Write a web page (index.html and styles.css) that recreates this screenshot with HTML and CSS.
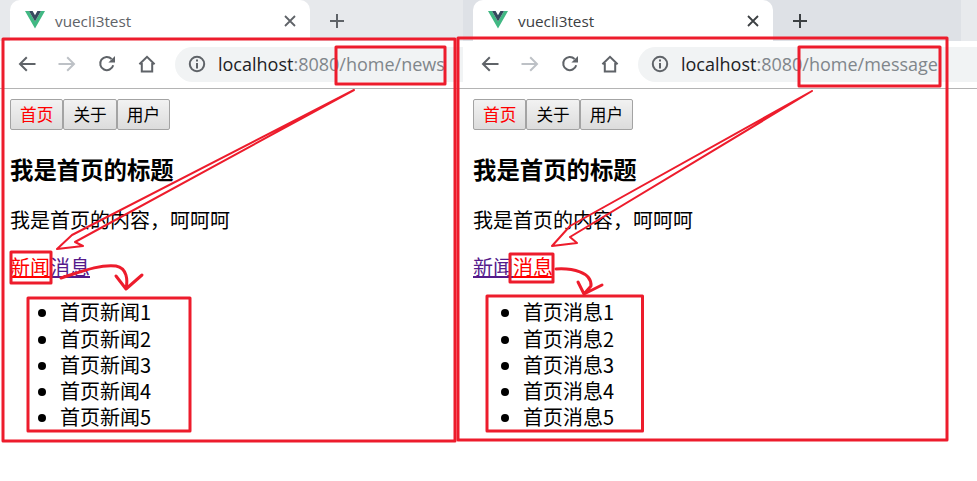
FILE: index.html
```html
<!DOCTYPE html>
<html lang="zh-CN">
<head>
<meta charset="utf-8">
<title>vuecli3test</title>
<link rel="stylesheet" href="styles.css">
</head>
<body>
<svg class="defs" aria-hidden="true">
  <symbol id="i-vue" viewBox="0 0 20 18">
    <path d="M0 0H4L10 10.5 16 0H20L10 17.5Z" fill="#41b883"/>
    <path d="M4 0H7.6L10 4.2 12.4 0H16L10 10.5Z" fill="#35495e"/>
  </symbol>
  <symbol id="i-close" viewBox="0 0 12 12">
    <path d="M1 1L11 11M11 1L1 11" fill="none" stroke="currentColor" stroke-width="1.8"/>
  </symbol>
  <symbol id="i-plus" viewBox="0 0 16 16">
    <path d="M8 1V15M1 8H15" fill="none" stroke="currentColor" stroke-width="2"/>
  </symbol>
  <symbol id="i-arrow" viewBox="0 0 18 16">
    <path d="M17.5 8H2M8.8 1.2L2 8L8.8 14.8" fill="none" stroke="currentColor" stroke-width="2"/>
  </symbol>
  <symbol id="i-reload" viewBox="0 0 18 18">
    <path d="M15.2 10.2A6.6 6.6 0 1 1 13.6 4" fill="none" stroke="currentColor" stroke-width="2"/>
    <path d="M10.4 7.6H17V1Z" fill="currentColor"/>
  </symbol>
  <symbol id="i-home" viewBox="0 0 18 18">
    <path d="M1.4 9.2L9 1.8L16.6 9.2M3.8 8V16.4H14.2V8" fill="none" stroke="currentColor" stroke-width="2"/>
  </symbol>
  <symbol id="i-info" viewBox="0 0 18 18">
    <circle cx="9" cy="9" r="7.2" fill="none" stroke="currentColor" stroke-width="2"/>
    <path d="M8 8H10V13.4H8ZM8 4.6H10V6.6H8Z" fill="currentColor"/>
  </symbol>
</svg>

<div class="stage">
  <section class="browser browser-left">
    <div class="tabstrip">
      <div class="tab">
        <svg class="tab-logo"><use href="#i-vue"/></svg>
        <span class="tab-title">vuecli3test</span>
        <svg class="tab-close"><use href="#i-close"/></svg>
      </div>
      <svg class="tab-new"><use href="#i-plus"/></svg>
    </div>
    <div class="toolbar">
      <svg class="nav-icon"><use href="#i-arrow"/></svg>
      <svg class="nav-icon nav-forward"><use href="#i-arrow"/></svg>
      <svg class="nav-icon"><use href="#i-reload"/></svg>
      <svg class="nav-icon"><use href="#i-home"/></svg>
      <div class="omnibox">
        <svg class="info-icon"><use href="#i-info"/></svg>
        <span class="url"><span class="host">localhost</span>:8080/home/news</span>
      </div>
    </div>
    <div class="page">
      <div class="btn-row">
        <button class="btn btn-active">首页</button><button class="btn">关于</button><button class="btn">用户</button>
      </div>
      <h3 class="heading">我是首页的标题</h3>
      <p class="para">我是首页的内容&#xFF0C;呵呵呵</p>
      <div class="links"><a class="link link-active">新闻</a><a class="link">消息</a></div>
      <ul class="list">
        <li>首页新闻1</li>
        <li>首页新闻2</li>
        <li>首页新闻3</li>
        <li>首页新闻4</li>
        <li>首页新闻5</li>
      </ul>
    </div>
  </section>

  <section class="browser browser-right">
    <div class="tabstrip">
      <div class="tab">
        <svg class="tab-logo"><use href="#i-vue"/></svg>
        <span class="tab-title">vuecli3test</span>
        <svg class="tab-close"><use href="#i-close"/></svg>
      </div>
      <svg class="tab-new"><use href="#i-plus"/></svg>
      <div class="strip-end"></div>
    </div>
    <div class="toolbar">
      <svg class="nav-icon"><use href="#i-arrow"/></svg>
      <svg class="nav-icon nav-forward"><use href="#i-arrow"/></svg>
      <svg class="nav-icon"><use href="#i-reload"/></svg>
      <svg class="nav-icon"><use href="#i-home"/></svg>
      <div class="omnibox">
        <svg class="info-icon"><use href="#i-info"/></svg>
        <span class="url"><span class="host">localhost</span>:8080/home/message</span>
      </div>
    </div>
    <div class="page">
      <div class="btn-row">
        <button class="btn btn-active">首页</button><button class="btn">关于</button><button class="btn">用户</button>
      </div>
      <h3 class="heading">我是首页的标题</h3>
      <p class="para">我是首页的内容&#xFF0C;呵呵呵</p>
      <div class="links"><a class="link">新闻</a><a class="link link-active">消息</a></div>
      <ul class="list">
        <li>首页消息1</li>
        <li>首页消息2</li>
        <li>首页消息3</li>
        <li>首页消息4</li>
        <li>首页消息5</li>
      </ul>
    </div>
  </section>

  <svg class="markup" viewBox="0 0 977 481" aria-hidden="true">
    <rect x="3" y="39" width="452" height="402"/>
    <rect x="458" y="38" width="489" height="402"/>
    <rect x="336" y="47" width="109" height="37"/>
    <rect x="799" y="47" width="141" height="39"/>
    <rect x="11" y="252" width="40" height="31"/>
    <rect x="510" y="254" width="43" height="28"/>
    <rect x="28" y="298" width="162" height="133"/>
    <rect x="487" y="296" width="155.500" height="135"/>
    <path class="thin" d="M354 90L72 235L57 249L83 246L75 242L354 90"/>
    <path class="thin" d="M812 91L570 226L552 246L577 243L570 237L812 91"/>
    <path d="M61 278C80 272 100 264 116 266C127 268 128 280 126 289M116 276L126 289L142 275"/>
    <path d="M556 269C572 268 592 272 591 286L584 294M578 282L584 294L602 285"/>
  </svg>
</div>
</body>
</html>
```

FILE: styles.css
```css
* { box-sizing: border-box; }

html, body { margin: 0; background: #fff; }

.defs { display: none; }

.stage {
  position: relative;
  display: flex;
  width: 977px;
  height: 481px;
  overflow: hidden;
  font-family: "Noto Sans CJK SC", "Noto Sans", sans-serif;
  color: #000;
}

.browser { flex: none; }
.browser-left { width: 463px; --strip: #e7e9ec; --tab-ink: #5f6368; }
.browser-right { width: 514px; --strip: #dee1e6; --tab-ink: #3c4043; }

.tabstrip {
  display: flex;
  align-items: center;
  height: 41px;
  padding-left: 10px;
  background: var(--strip);
}

.tab {
  display: flex;
  align-items: center;
  width: 300px;
  height: 41px;
  padding: 0 14px 0 15px;
  background: #fff;
  border-radius: 10px 10px 0 0;
}

.tab-logo { width: 20px; height: 18px; margin-top: -1px; }

.tab-title {
  flex: 1;
  margin-left: 10px;
  font-family: "Open Sans", sans-serif;
  font-size: 15.3px;
  color: var(--tab-ink);
}

.tab-close { width: 12px; height: 12px; color: var(--tab-ink); }

.tab-new { width: 16px; height: 16px; margin-left: 19px; color: var(--tab-ink); }

.strip-end { align-self: stretch; width: 16px; margin-left: auto; background: #e8eaed; }

.toolbar {
  display: flex;
  align-items: center;
  height: 48px;
  padding: 0 0 1px 18px;
  border-bottom: 1px solid #b4b4b4;
  background: #fff;
}

.nav-icon { width: 18px; height: 18px; margin-right: 22px; color: #5f6368; flex: none; }
.nav-forward { color: #bdc1c6; transform: scaleX(-1); }

.omnibox {
  display: flex;
  align-items: center;
  flex: 1;
  height: 35px;
  margin-left: -3px;
  padding-left: 13px;
  border-radius: 18px 0 0 18px;
  background: #f1f3f4;
  min-width: 0;
}

.info-icon { width: 18px; height: 18px; color: #5f6368; flex: none; }

.url {
  margin-left: 12px;
  font-family: "Open Sans", sans-serif;
  font-size: 18px;
  color: #80868b;
  white-space: nowrap;
}

.host { color: #202124; }

.page { padding: 10px 10px 0; font-size: 20px; line-height: 26.25px; }

.btn-row { display: flex; height: 31px; }

.btn {
  width: 53.4px;
  height: 31px;
  padding: 0;
  border: 1px solid #a3a3a3;
  border-radius: 2px;
  background: linear-gradient(#f2f2f2, #dcdcdc);
  font: 16.67px/1 "Noto Sans CJK SC", sans-serif;
  color: #000;
}

.btn-active { color: #f00; }

.heading {
  margin: 24px 0 23px;
  font-size: 23.4px;
  line-height: 30px;
  font-weight: 700;
}

.para { margin: 0 0 21px; }

.links { height: 26px; }

.link { color: #551a8b; text-decoration: underline; }
.link-active { color: #f00; }

.list { margin: 19px 0 0; padding-left: 50px; }

.markup {
  position: absolute;
  left: 0;
  top: 0;
  width: 977px;
  height: 481px;
  fill: none;
  stroke: #ed1c2c;
  stroke-width: 3;
  stroke-linejoin: round;
  stroke-linecap: round;
  pointer-events: none;
}

.markup .thin { stroke-width: 2; }
```
